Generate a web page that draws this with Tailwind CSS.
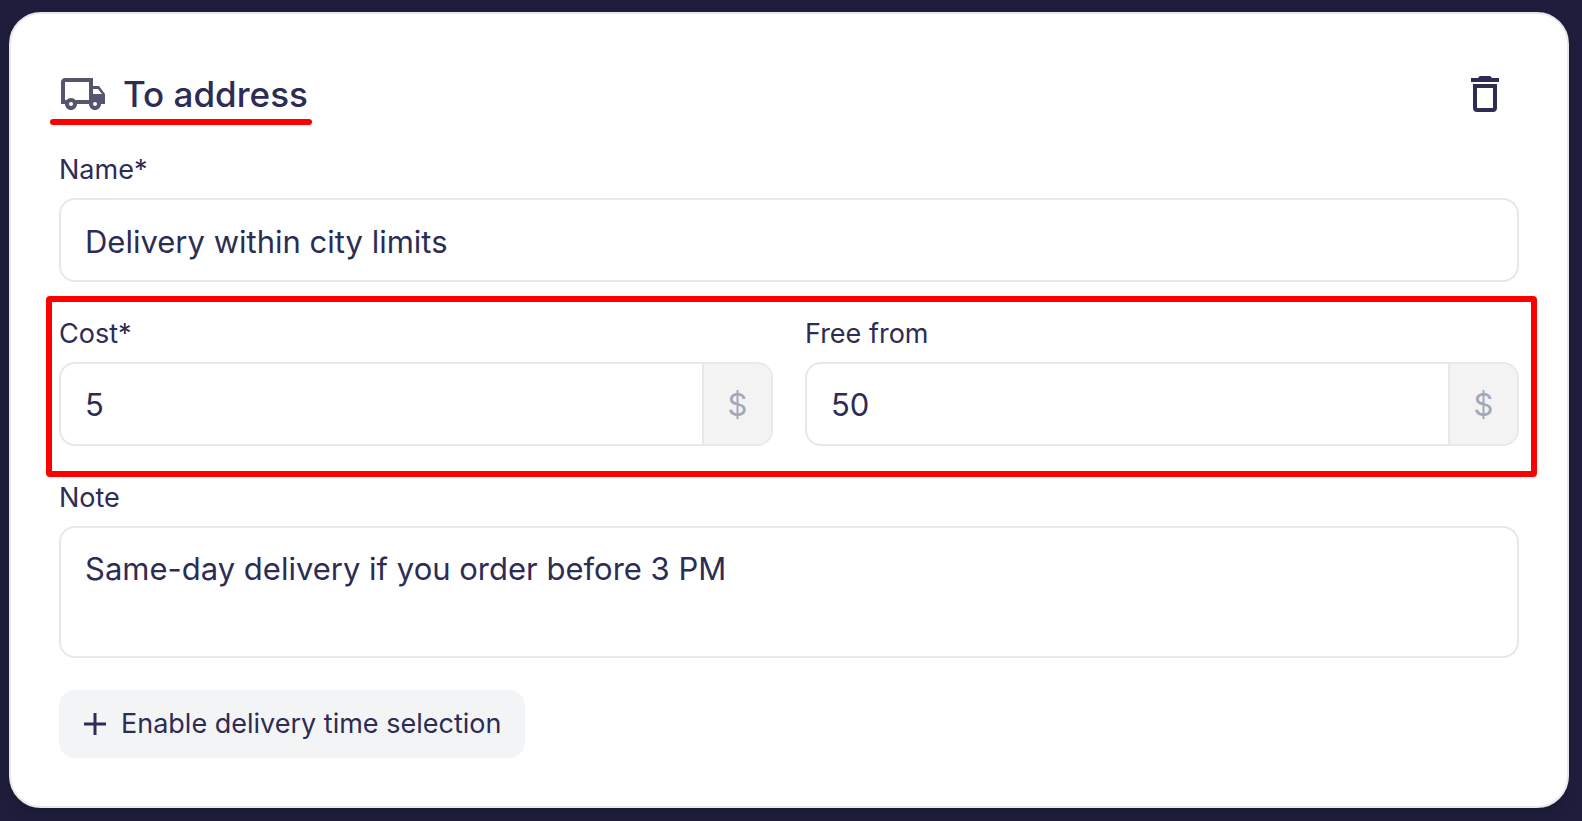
<!DOCTYPE html>
<html lang="en">
<head>
    <meta charset="UTF-8">
    <meta name="viewport" content="width=device-width, initial-scale=1.0">
    <title>Delivery settings</title>
    <script src="https://cdn.jsdelivr.net/npm/@tailwindcss/browser@4"></script>
</head>
<body class="min-h-screen bg-[#1e1e3c] pt-3 pr-[13px] pb-3 pl-[9px] font-['Inter',sans-serif] text-[#2d2c54]">

    <form class="rounded-[32px] border-2 border-[#e7e7ec] bg-white p-12 shadow-lg">

        <!-- Header -->
        <div class="mb-6 flex h-16 items-center justify-between">
            <div class="relative flex items-center gap-4">
                <svg class="size-12 text-[#55556f]" viewBox="0 0 24 24" fill="currentColor" aria-hidden="true">
                    <path d="M20 8h-3V4H3c-1.100 0-2 .9-2 2v11h2c0 1.660 1.340 3 3 3s3-1.340 3-3h6c0 1.660 1.340 3 3 3s3-1.340 3-3h2v-5l-3-4zm-.5 1.500 1.960 2.500H17V9.500h2.500zM6 18c-.55 0-1-.45-1-1s.45-1 1-1 1 .45 1 1-.45 1-1 1zm2.220-3c-.55-.61-1.330-1-2.220-1s-1.670.39-2.220 1H3V6h12v9H8.220zM18 18c-.55 0-1-.45-1-1s.45-1 1-1 1 .45 1 1-.45 1-1 1z"></path>
                </svg>
                <h1 class="text-[35px] leading-10 font-medium">To address</h1>
                <span class="absolute -right-1 -bottom-[7px] -left-[9px] h-1.5 rounded-full bg-[#ff0000]"></span>
            </div>
            <button type="button" aria-label="Delete" class="p-2.5">
                <svg class="size-12" viewBox="0 0 24 24" fill="currentColor" aria-hidden="true">
                    <path d="M5 4h3.600c.3-.7.700-1 1.400-1h4c.7 0 1.100.3 1.400 1H19v2H5V4z"></path>
                    <path fill-rule="evenodd" d="M6 7h12v12c0 1.200-.8 2-2 2H8c-1.200 0-2-.8-2-2V7zm2 2v10h8V9H8z"></path>
                </svg>
            </button>
        </div>

        <div class="flex flex-col gap-8">
            <!-- Name -->
            <div class="flex flex-col gap-2">
                <label for="name" class="text-[27px] leading-10">Name*</label>
                <input id="name" type="text" value="Delivery within city limits" class="h-21 w-full rounded-2xl border-2 border-[#e7e7ec] px-6 pt-0.5 text-[31px] outline-none">
            </div>

            <!-- Cost -->
            <div class="relative grid grid-cols-2 gap-8">
                <div class="flex flex-col gap-2">
                    <label for="cost" class="text-[27px] leading-10">Cost*</label>
                    <div class="flex h-21 overflow-hidden rounded-2xl border-2 border-[#e7e7ec]">
                        <input id="cost" type="text" value="5" class="min-w-0 flex-1 px-6 pt-0.5 text-[31px] outline-none">
                        <span class="flex w-[69px] items-center justify-center border-l-2 border-[#e7e7ec] bg-[#f3f3f3] pt-0.5 text-[31px] text-[#a1a8b9]">$</span>
                    </div>
                </div>
                <div class="flex flex-col gap-2">
                    <label for="free-from" class="text-[27px] leading-10">Free from</label>
                    <div class="flex h-21 overflow-hidden rounded-2xl border-2 border-[#e7e7ec]">
                        <input id="free-from" type="text" value="50" class="min-w-0 flex-1 px-6 pt-0.5 text-[31px] outline-none">
                        <span class="flex w-[69px] items-center justify-center border-l-2 border-[#e7e7ec] bg-[#f3f3f3] pt-0.5 text-[31px] text-[#a1a8b9]">$</span>
                    </div>
                </div>
                <div class="pointer-events-none absolute -top-[18px] -right-[18px] -bottom-[31px] -left-[13px] rounded-sm border-6 border-[#ff0000]"></div>
            </div>

            <!-- Note -->
            <div class="flex flex-col gap-2">
                <label for="note" class="text-[27px] leading-10">Note</label>
                <textarea id="note" class="h-33 w-full resize-none rounded-2xl border-2 border-[#e7e7ec] px-6 py-5 text-[31px] leading-[42px] outline-none">Same-day delivery if you order before 3 PM</textarea>
            </div>

            <button type="button" class="flex h-17 items-center gap-3.5 self-start rounded-2xl bg-[#f3f4f6] px-6 text-[27px]">
                <svg class="size-6" viewBox="0 0 24 24" fill="none" stroke="currentColor" stroke-width="3" aria-hidden="true">
                    <path d="M12 1v22M1 12h22"></path>
                </svg>
                Enable delivery time selection
            </button>
        </div>
    </form>

</body>
</html>
